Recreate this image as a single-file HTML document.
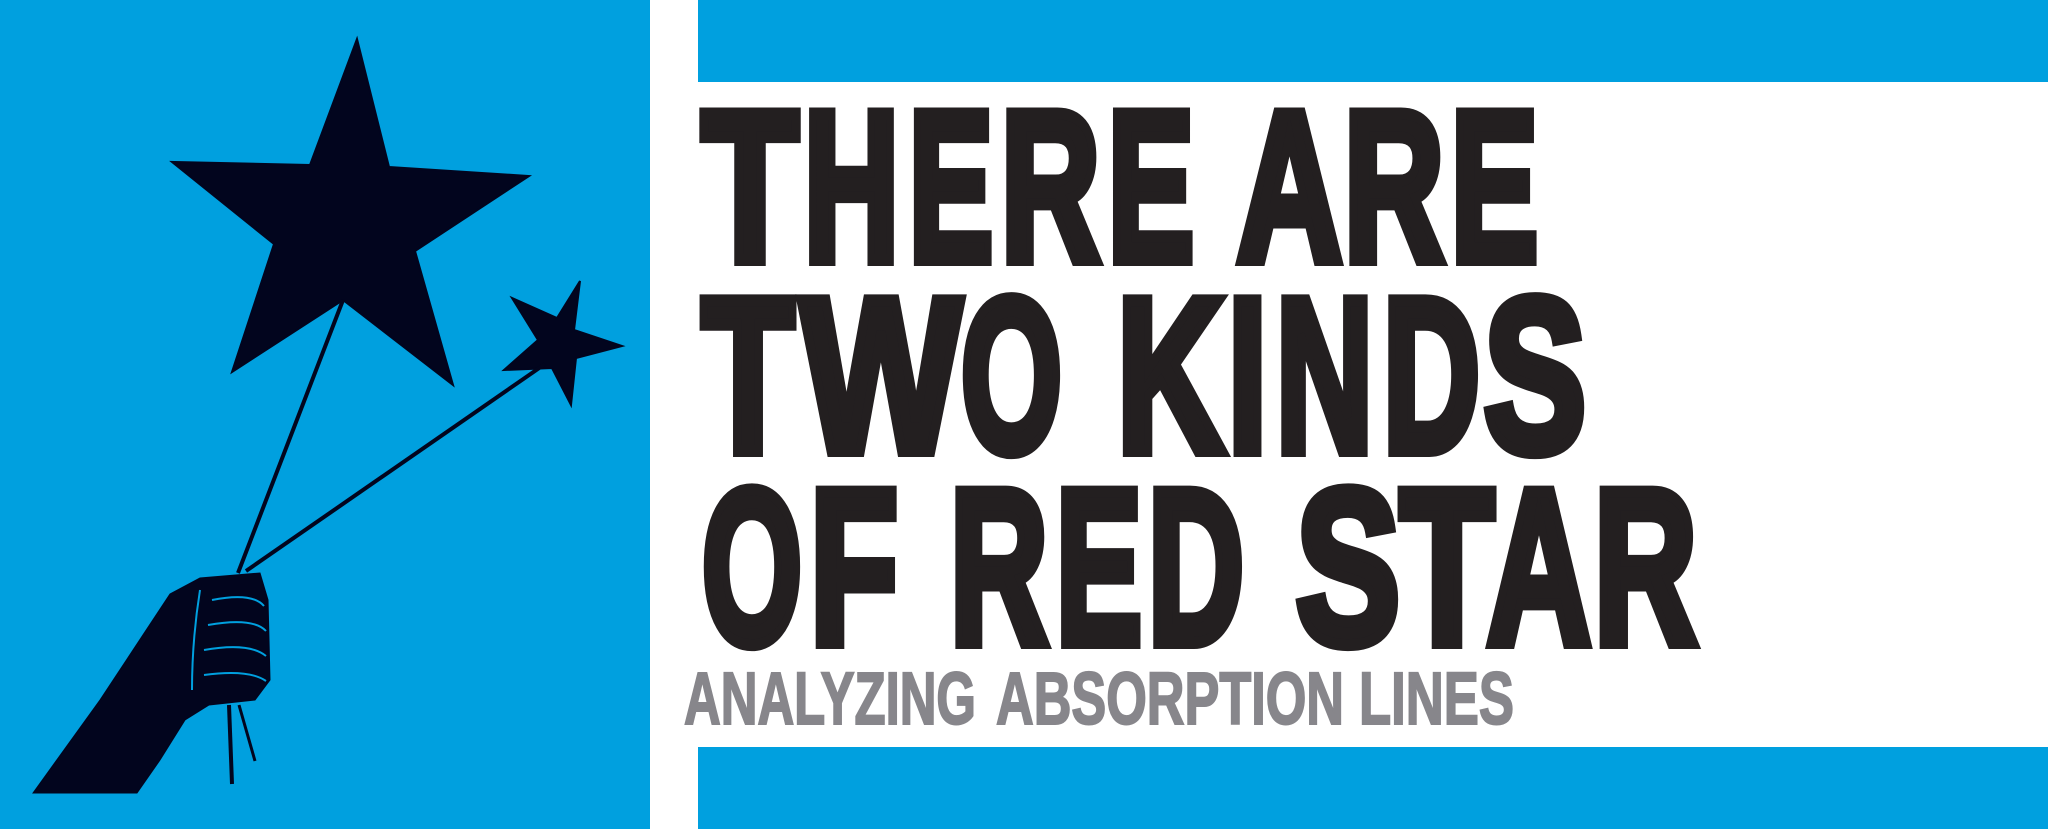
<!DOCTYPE html>
<html><head><meta charset="utf-8"><style>
html,body{margin:0;padding:0;background:#fff;width:2048px;height:829px;overflow:hidden}
</style></head><body>
<svg width="2048" height="829" viewBox="0 0 2048 829" xmlns="http://www.w3.org/2000/svg">
<rect x="0" y="0" width="2048" height="829" fill="#fff"/>
<rect x="0" y="0" width="650" height="829" fill="#00a0df"/>
<rect x="698" y="0" width="1350" height="82" fill="#00a0df"/>
<rect x="698" y="747" width="1350" height="82" fill="#00a0df"/>
<g fill="#02051e" stroke="#02051e">
<polygon points="357,39 389,167 529,176 415,251 453,385 343,300 232,372 274,244 172,162 310,165" stroke-width="2"/>
<polygon points="580,281 574,330 622,346 576,358 571,405 552,368 504,370 538,340 512,298 557,318" stroke-width="2"/>
<line x1="343" y1="300" x2="238" y2="573" stroke-width="4"/>
<line x1="545" y1="364" x2="246" y2="571" stroke-width="4"/>
<polygon points="33,793 100,700 170,594 200,578 260,573 268,600 270,680 255,700 209,705 185,720 160,760 137,793" stroke-width="1"/>
<line x1="229" y1="705" x2="232" y2="784" stroke-width="4"/>
<line x1="239" y1="705" x2="255" y2="761" stroke-width="3"/>
</g>
<g fill="none" stroke="#00a0df" stroke-width="2">
<path d="M212,600 q40,-8 52,6 M208,625 q45,-8 58,6 M204,650 q45,-8 62,6 M204,675 q45,-6 62,6 M200,590 q-8,50 -8,100"/>
</g>
<g font-family="'Liberation Sans',sans-serif" font-weight="bold" fill="#231f20" stroke="#231f20" stroke-width="12">
<g font-size="213">
<text x="702" y="260" textLength="96" lengthAdjust="spacingAndGlyphs">T</text>
<text x="804" y="260" textLength="95" lengthAdjust="spacingAndGlyphs">H</text>
<text x="909" y="260" textLength="84" lengthAdjust="spacingAndGlyphs">E</text>
<text x="1001" y="260" textLength="99" lengthAdjust="spacingAndGlyphs">R</text>
<text x="1108" y="260" textLength="86" lengthAdjust="spacingAndGlyphs">E</text>
<text x="1237" y="260" textLength="105" lengthAdjust="spacingAndGlyphs">A</text>
<text x="1344" y="260" textLength="100" lengthAdjust="spacingAndGlyphs">R</text>
<text x="1451" y="260" textLength="87" lengthAdjust="spacingAndGlyphs">E</text>
</g>
<g font-size="219">
<text x="702" y="451" textLength="92" lengthAdjust="spacingAndGlyphs">T</text>
<text x="801" y="451" textLength="160" lengthAdjust="spacingAndGlyphs">W</text>
<text x="961" y="451" textLength="101" lengthAdjust="spacingAndGlyphs">O</text>
<text x="1117" y="451" textLength="107" lengthAdjust="spacingAndGlyphs">K</text>
<text x="1228" y="451" textLength="39" lengthAdjust="spacingAndGlyphs">I</text>
<text x="1276" y="451" textLength="97" lengthAdjust="spacingAndGlyphs">N</text>
<text x="1383" y="451" textLength="97" lengthAdjust="spacingAndGlyphs">D</text>
<text x="1484" y="451" textLength="102" lengthAdjust="spacingAndGlyphs">S</text>
</g>
<g font-size="220">
<text x="702" y="643" textLength="100" lengthAdjust="spacingAndGlyphs">O</text>
<text x="810" y="643" textLength="88" lengthAdjust="spacingAndGlyphs">F</text>
<text x="950" y="643" textLength="98" lengthAdjust="spacingAndGlyphs">R</text>
<text x="1056" y="643" textLength="86" lengthAdjust="spacingAndGlyphs">E</text>
<text x="1148" y="643" textLength="96" lengthAdjust="spacingAndGlyphs">D</text>
<text x="1296" y="643" textLength="104" lengthAdjust="spacingAndGlyphs">S</text>
<text x="1400" y="643" textLength="94" lengthAdjust="spacingAndGlyphs">T</text>
<text x="1487" y="643" textLength="104" lengthAdjust="spacingAndGlyphs">A</text>
<text x="1594" y="643" textLength="103" lengthAdjust="spacingAndGlyphs">R</text>
</g>
</g>
<g font-family="'Liberation Sans',sans-serif" font-weight="bold" font-size="74" fill="#87868b" stroke="#87868b" stroke-width="2">
<text x="684" y="724" textLength="292" lengthAdjust="spacingAndGlyphs">ANALYZING</text>
<text x="996" y="724" textLength="348" lengthAdjust="spacingAndGlyphs">ABSORPTION</text>
<text x="1359" y="724" textLength="155" lengthAdjust="spacingAndGlyphs">LINES</text>
</g>
</svg>
</body></html>
